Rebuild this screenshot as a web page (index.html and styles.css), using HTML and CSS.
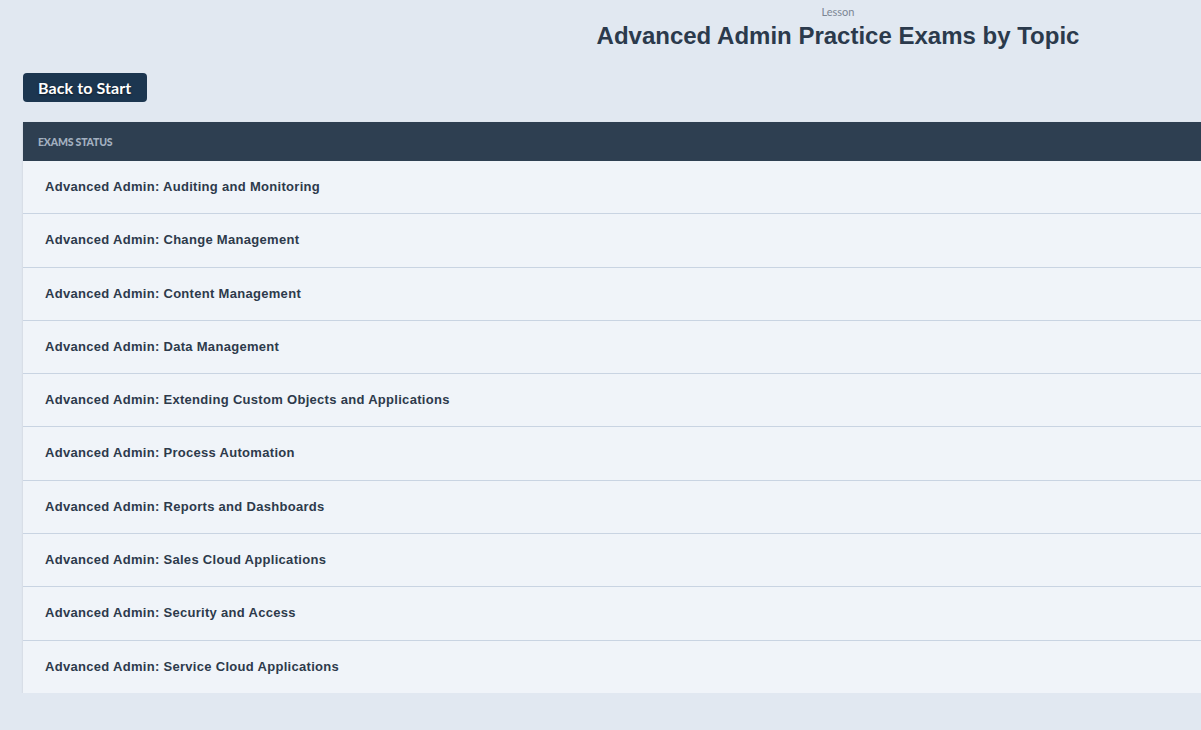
FILE: index.html
```html
<!DOCTYPE html>
<html lang="en">
<head>
  <meta charset="UTF-8">
  <meta name="viewport" content="width=device-width, initial-scale=1.0">
  <title>Advanced Admin Practice Exams by Topic</title>
  <link rel="stylesheet" href="styles.css">
</head>
<body>

  <div class="page">
    <div class="lesson-header">
      <div class="lesson-label">Lesson</div>
      <h1>Advanced Admin Practice Exams by Topic</h1>
    </div>

    <a class="back-btn" href="#">Back to Start</a>

    <div class="exams-table">
      <div class="exams-head">Exams Status</div>
      <div class="exam-row">Advanced Admin: Auditing and Monitoring</div>
      <div class="exam-row">Advanced Admin: Change Management</div>
      <div class="exam-row">Advanced Admin: Content Management</div>
      <div class="exam-row">Advanced Admin: Data Management</div>
      <div class="exam-row">Advanced Admin: Extending Custom Objects and Applications</div>
      <div class="exam-row">Advanced Admin: Process Automation</div>
      <div class="exam-row">Advanced Admin: Reports and Dashboards</div>
      <div class="exam-row">Advanced Admin: Sales Cloud Applications</div>
      <div class="exam-row">Advanced Admin: Security and Access</div>
      <div class="exam-row">Advanced Admin: Service Cloud Applications</div>
    </div>
  </div>

</body>
</html>
```

FILE: styles.css
```css
:root {
  --page-bg: #e1e8f1;
  --row-bg: #f0f4f9;
  --head-bg: #2e3f51;
  --btn-bg: #1c3650;
  --text-color: #2d3a4b;
  --border-color: #c9d4e2;
}
html, body {
  overflow: hidden;
}
body {
  margin: 0;
  background-color: var(--page-bg);
  font-family: "Liberation Sans", Arial, sans-serif;
  color: var(--text-color);
}
.page {
  width: 1630px;
  padding: 0 0 0 23px;
}
.lesson-header {
  text-align: center;
  padding-top: 5px;
}
.lesson-label {
  font-family: Lato, sans-serif;
  font-size: 11px;
  color: #7b8694;
  line-height: 14px;
}
.lesson-header h1 {
  margin: 2px 0 0;
  font-size: 24px;
  line-height: 30px;
  font-weight: bold;
  color: #2b3a4c;
}
.back-btn {
  display: inline-block;
  margin-top: 22px;
  padding: 0 16px 0 15px;
  height: 29px;
  line-height: 29px;
  background-color: var(--btn-bg);
  color: #fff;
  border-radius: 4px;
  font-family: Lato, sans-serif;
  font-weight: bold;
  font-size: 16px;
  letter-spacing: 0.1px;
  text-decoration: none;
  text-shadow: 0 1px 2px rgba(0,0,0,0.5);
}
.exams-table {
  margin-top: 20px;
  background-color: var(--row-bg);
  box-shadow: 0 1px 2px rgba(0,0,0,0.12);
}
.exams-head {
  height: 39px;
  line-height: 40px;
  padding-left: 15px;
  background-color: var(--head-bg);
  color: #a3b0c0;
  font-family: Lato, sans-serif;
  font-weight: 900;
  font-size: 10.5px;
  text-transform: uppercase;
  letter-spacing: -0.2px;
}
.exam-row {
  height: 52.3px;
  line-height: 52px;
  padding-left: 22px;
  font-size: 13px;
  font-weight: bold;
  letter-spacing: 0.3px;
  border-bottom: 1px solid var(--border-color);
}
.exam-row:last-child {
  border-bottom: none;
}
```
